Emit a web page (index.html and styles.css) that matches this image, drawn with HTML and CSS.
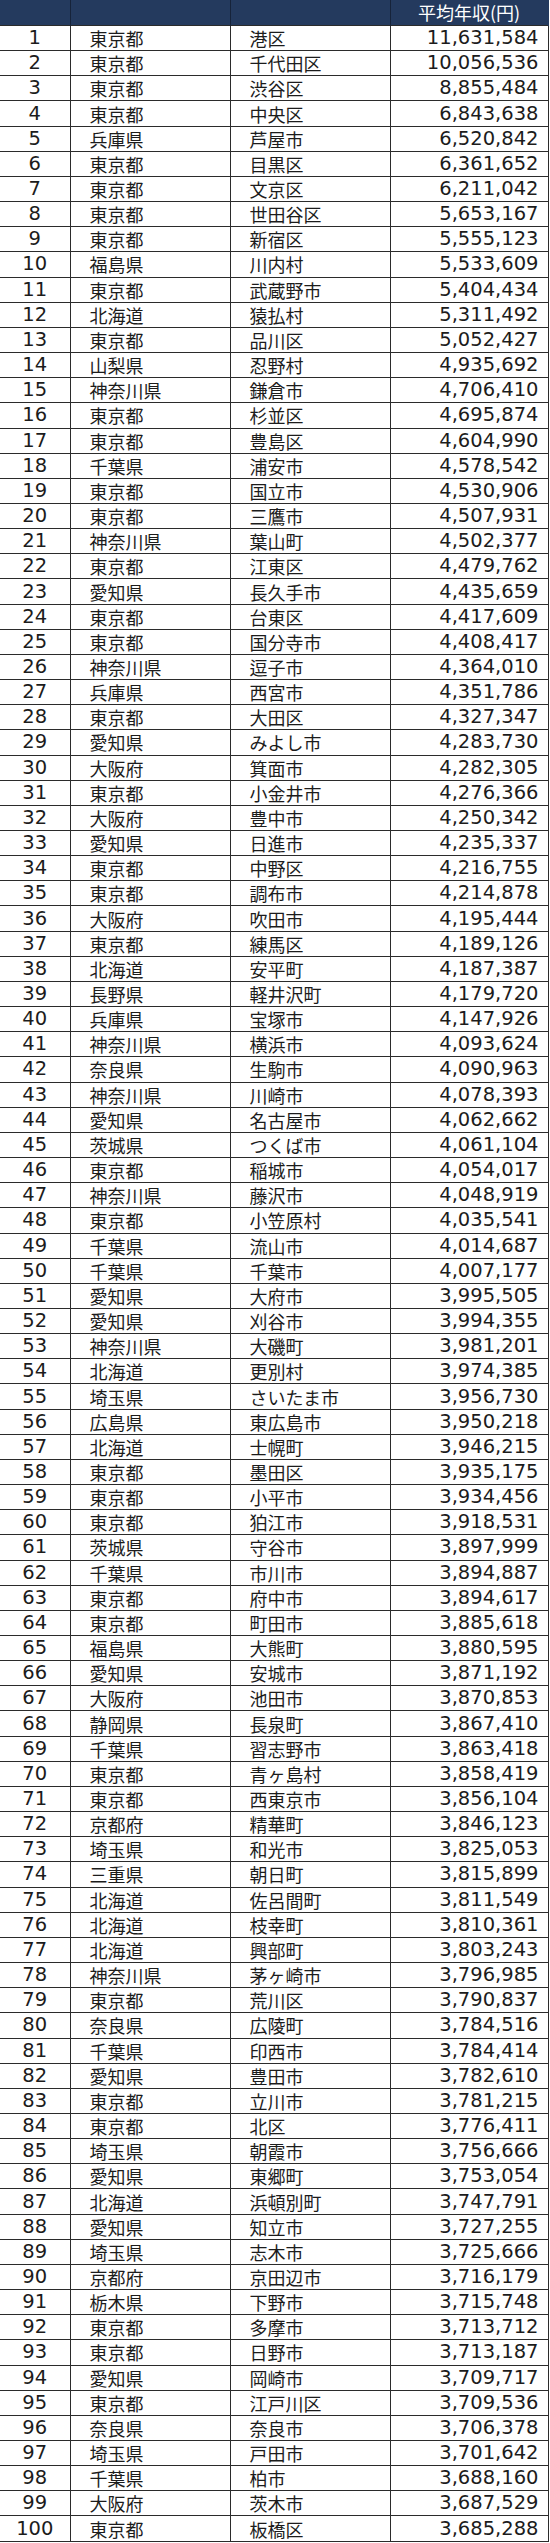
FILE: index.html
```html
<!DOCTYPE html>
<html lang="ja">
<head>
<meta charset="utf-8">
<title>平均年収ランキング</title>
<link rel="stylesheet" href="styles.css">
</head>
<body>
<table class="rank-table">
<colgroup><col class="c-rank"><col class="c-pref"><col class="c-city"><col class="c-num"></colgroup>
<thead>
<tr><th></th><th></th><th></th><th class="h-num">平均年収(円)</th></tr>
</thead>
<tbody>
<tr><td class="rank">1</td><td class="jp">東京都</td><td class="jp">港区</td><td class="num">11,631,584</td></tr>
<tr><td class="rank">2</td><td class="jp">東京都</td><td class="jp">千代田区</td><td class="num">10,056,536</td></tr>
<tr><td class="rank">3</td><td class="jp">東京都</td><td class="jp">渋谷区</td><td class="num">8,855,484</td></tr>
<tr><td class="rank">4</td><td class="jp">東京都</td><td class="jp">中央区</td><td class="num">6,843,638</td></tr>
<tr><td class="rank">5</td><td class="jp">兵庫県</td><td class="jp">芦屋市</td><td class="num">6,520,842</td></tr>
<tr><td class="rank">6</td><td class="jp">東京都</td><td class="jp">目黒区</td><td class="num">6,361,652</td></tr>
<tr><td class="rank">7</td><td class="jp">東京都</td><td class="jp">文京区</td><td class="num">6,211,042</td></tr>
<tr><td class="rank">8</td><td class="jp">東京都</td><td class="jp">世田谷区</td><td class="num">5,653,167</td></tr>
<tr><td class="rank">9</td><td class="jp">東京都</td><td class="jp">新宿区</td><td class="num">5,555,123</td></tr>
<tr><td class="rank">10</td><td class="jp">福島県</td><td class="jp">川内村</td><td class="num">5,533,609</td></tr>
<tr><td class="rank">11</td><td class="jp">東京都</td><td class="jp">武蔵野市</td><td class="num">5,404,434</td></tr>
<tr><td class="rank">12</td><td class="jp">北海道</td><td class="jp">猿払村</td><td class="num">5,311,492</td></tr>
<tr><td class="rank">13</td><td class="jp">東京都</td><td class="jp">品川区</td><td class="num">5,052,427</td></tr>
<tr><td class="rank">14</td><td class="jp">山梨県</td><td class="jp">忍野村</td><td class="num">4,935,692</td></tr>
<tr><td class="rank">15</td><td class="jp">神奈川県</td><td class="jp">鎌倉市</td><td class="num">4,706,410</td></tr>
<tr><td class="rank">16</td><td class="jp">東京都</td><td class="jp">杉並区</td><td class="num">4,695,874</td></tr>
<tr><td class="rank">17</td><td class="jp">東京都</td><td class="jp">豊島区</td><td class="num">4,604,990</td></tr>
<tr><td class="rank">18</td><td class="jp">千葉県</td><td class="jp">浦安市</td><td class="num">4,578,542</td></tr>
<tr><td class="rank">19</td><td class="jp">東京都</td><td class="jp">国立市</td><td class="num">4,530,906</td></tr>
<tr><td class="rank">20</td><td class="jp">東京都</td><td class="jp">三鷹市</td><td class="num">4,507,931</td></tr>
<tr><td class="rank">21</td><td class="jp">神奈川県</td><td class="jp">葉山町</td><td class="num">4,502,377</td></tr>
<tr><td class="rank">22</td><td class="jp">東京都</td><td class="jp">江東区</td><td class="num">4,479,762</td></tr>
<tr><td class="rank">23</td><td class="jp">愛知県</td><td class="jp">長久手市</td><td class="num">4,435,659</td></tr>
<tr><td class="rank">24</td><td class="jp">東京都</td><td class="jp">台東区</td><td class="num">4,417,609</td></tr>
<tr><td class="rank">25</td><td class="jp">東京都</td><td class="jp">国分寺市</td><td class="num">4,408,417</td></tr>
<tr><td class="rank">26</td><td class="jp">神奈川県</td><td class="jp">逗子市</td><td class="num">4,364,010</td></tr>
<tr><td class="rank">27</td><td class="jp">兵庫県</td><td class="jp">西宮市</td><td class="num">4,351,786</td></tr>
<tr><td class="rank">28</td><td class="jp">東京都</td><td class="jp">大田区</td><td class="num">4,327,347</td></tr>
<tr><td class="rank">29</td><td class="jp">愛知県</td><td class="jp">みよし市</td><td class="num">4,283,730</td></tr>
<tr><td class="rank">30</td><td class="jp">大阪府</td><td class="jp">箕面市</td><td class="num">4,282,305</td></tr>
<tr><td class="rank">31</td><td class="jp">東京都</td><td class="jp">小金井市</td><td class="num">4,276,366</td></tr>
<tr><td class="rank">32</td><td class="jp">大阪府</td><td class="jp">豊中市</td><td class="num">4,250,342</td></tr>
<tr><td class="rank">33</td><td class="jp">愛知県</td><td class="jp">日進市</td><td class="num">4,235,337</td></tr>
<tr><td class="rank">34</td><td class="jp">東京都</td><td class="jp">中野区</td><td class="num">4,216,755</td></tr>
<tr><td class="rank">35</td><td class="jp">東京都</td><td class="jp">調布市</td><td class="num">4,214,878</td></tr>
<tr><td class="rank">36</td><td class="jp">大阪府</td><td class="jp">吹田市</td><td class="num">4,195,444</td></tr>
<tr><td class="rank">37</td><td class="jp">東京都</td><td class="jp">練馬区</td><td class="num">4,189,126</td></tr>
<tr><td class="rank">38</td><td class="jp">北海道</td><td class="jp">安平町</td><td class="num">4,187,387</td></tr>
<tr><td class="rank">39</td><td class="jp">長野県</td><td class="jp">軽井沢町</td><td class="num">4,179,720</td></tr>
<tr><td class="rank">40</td><td class="jp">兵庫県</td><td class="jp">宝塚市</td><td class="num">4,147,926</td></tr>
<tr><td class="rank">41</td><td class="jp">神奈川県</td><td class="jp">横浜市</td><td class="num">4,093,624</td></tr>
<tr><td class="rank">42</td><td class="jp">奈良県</td><td class="jp">生駒市</td><td class="num">4,090,963</td></tr>
<tr><td class="rank">43</td><td class="jp">神奈川県</td><td class="jp">川崎市</td><td class="num">4,078,393</td></tr>
<tr><td class="rank">44</td><td class="jp">愛知県</td><td class="jp">名古屋市</td><td class="num">4,062,662</td></tr>
<tr><td class="rank">45</td><td class="jp">茨城県</td><td class="jp">つくば市</td><td class="num">4,061,104</td></tr>
<tr><td class="rank">46</td><td class="jp">東京都</td><td class="jp">稲城市</td><td class="num">4,054,017</td></tr>
<tr><td class="rank">47</td><td class="jp">神奈川県</td><td class="jp">藤沢市</td><td class="num">4,048,919</td></tr>
<tr><td class="rank">48</td><td class="jp">東京都</td><td class="jp">小笠原村</td><td class="num">4,035,541</td></tr>
<tr><td class="rank">49</td><td class="jp">千葉県</td><td class="jp">流山市</td><td class="num">4,014,687</td></tr>
<tr><td class="rank">50</td><td class="jp">千葉県</td><td class="jp">千葉市</td><td class="num">4,007,177</td></tr>
<tr><td class="rank">51</td><td class="jp">愛知県</td><td class="jp">大府市</td><td class="num">3,995,505</td></tr>
<tr><td class="rank">52</td><td class="jp">愛知県</td><td class="jp">刈谷市</td><td class="num">3,994,355</td></tr>
<tr><td class="rank">53</td><td class="jp">神奈川県</td><td class="jp">大磯町</td><td class="num">3,981,201</td></tr>
<tr><td class="rank">54</td><td class="jp">北海道</td><td class="jp">更別村</td><td class="num">3,974,385</td></tr>
<tr><td class="rank">55</td><td class="jp">埼玉県</td><td class="jp">さいたま市</td><td class="num">3,956,730</td></tr>
<tr><td class="rank">56</td><td class="jp">広島県</td><td class="jp">東広島市</td><td class="num">3,950,218</td></tr>
<tr><td class="rank">57</td><td class="jp">北海道</td><td class="jp">士幌町</td><td class="num">3,946,215</td></tr>
<tr><td class="rank">58</td><td class="jp">東京都</td><td class="jp">墨田区</td><td class="num">3,935,175</td></tr>
<tr><td class="rank">59</td><td class="jp">東京都</td><td class="jp">小平市</td><td class="num">3,934,456</td></tr>
<tr><td class="rank">60</td><td class="jp">東京都</td><td class="jp">狛江市</td><td class="num">3,918,531</td></tr>
<tr><td class="rank">61</td><td class="jp">茨城県</td><td class="jp">守谷市</td><td class="num">3,897,999</td></tr>
<tr><td class="rank">62</td><td class="jp">千葉県</td><td class="jp">市川市</td><td class="num">3,894,887</td></tr>
<tr><td class="rank">63</td><td class="jp">東京都</td><td class="jp">府中市</td><td class="num">3,894,617</td></tr>
<tr><td class="rank">64</td><td class="jp">東京都</td><td class="jp">町田市</td><td class="num">3,885,618</td></tr>
<tr><td class="rank">65</td><td class="jp">福島県</td><td class="jp">大熊町</td><td class="num">3,880,595</td></tr>
<tr><td class="rank">66</td><td class="jp">愛知県</td><td class="jp">安城市</td><td class="num">3,871,192</td></tr>
<tr><td class="rank">67</td><td class="jp">大阪府</td><td class="jp">池田市</td><td class="num">3,870,853</td></tr>
<tr><td class="rank">68</td><td class="jp">静岡県</td><td class="jp">長泉町</td><td class="num">3,867,410</td></tr>
<tr><td class="rank">69</td><td class="jp">千葉県</td><td class="jp">習志野市</td><td class="num">3,863,418</td></tr>
<tr><td class="rank">70</td><td class="jp">東京都</td><td class="jp">青ヶ島村</td><td class="num">3,858,419</td></tr>
<tr><td class="rank">71</td><td class="jp">東京都</td><td class="jp">西東京市</td><td class="num">3,856,104</td></tr>
<tr><td class="rank">72</td><td class="jp">京都府</td><td class="jp">精華町</td><td class="num">3,846,123</td></tr>
<tr><td class="rank">73</td><td class="jp">埼玉県</td><td class="jp">和光市</td><td class="num">3,825,053</td></tr>
<tr><td class="rank">74</td><td class="jp">三重県</td><td class="jp">朝日町</td><td class="num">3,815,899</td></tr>
<tr><td class="rank">75</td><td class="jp">北海道</td><td class="jp">佐呂間町</td><td class="num">3,811,549</td></tr>
<tr><td class="rank">76</td><td class="jp">北海道</td><td class="jp">枝幸町</td><td class="num">3,810,361</td></tr>
<tr><td class="rank">77</td><td class="jp">北海道</td><td class="jp">興部町</td><td class="num">3,803,243</td></tr>
<tr><td class="rank">78</td><td class="jp">神奈川県</td><td class="jp">茅ヶ崎市</td><td class="num">3,796,985</td></tr>
<tr><td class="rank">79</td><td class="jp">東京都</td><td class="jp">荒川区</td><td class="num">3,790,837</td></tr>
<tr><td class="rank">80</td><td class="jp">奈良県</td><td class="jp">広陵町</td><td class="num">3,784,516</td></tr>
<tr><td class="rank">81</td><td class="jp">千葉県</td><td class="jp">印西市</td><td class="num">3,784,414</td></tr>
<tr><td class="rank">82</td><td class="jp">愛知県</td><td class="jp">豊田市</td><td class="num">3,782,610</td></tr>
<tr><td class="rank">83</td><td class="jp">東京都</td><td class="jp">立川市</td><td class="num">3,781,215</td></tr>
<tr><td class="rank">84</td><td class="jp">東京都</td><td class="jp">北区</td><td class="num">3,776,411</td></tr>
<tr><td class="rank">85</td><td class="jp">埼玉県</td><td class="jp">朝霞市</td><td class="num">3,756,666</td></tr>
<tr><td class="rank">86</td><td class="jp">愛知県</td><td class="jp">東郷町</td><td class="num">3,753,054</td></tr>
<tr><td class="rank">87</td><td class="jp">北海道</td><td class="jp">浜頓別町</td><td class="num">3,747,791</td></tr>
<tr><td class="rank">88</td><td class="jp">愛知県</td><td class="jp">知立市</td><td class="num">3,727,255</td></tr>
<tr><td class="rank">89</td><td class="jp">埼玉県</td><td class="jp">志木市</td><td class="num">3,725,666</td></tr>
<tr><td class="rank">90</td><td class="jp">京都府</td><td class="jp">京田辺市</td><td class="num">3,716,179</td></tr>
<tr><td class="rank">91</td><td class="jp">栃木県</td><td class="jp">下野市</td><td class="num">3,715,748</td></tr>
<tr><td class="rank">92</td><td class="jp">東京都</td><td class="jp">多摩市</td><td class="num">3,713,712</td></tr>
<tr><td class="rank">93</td><td class="jp">東京都</td><td class="jp">日野市</td><td class="num">3,713,187</td></tr>
<tr><td class="rank">94</td><td class="jp">愛知県</td><td class="jp">岡崎市</td><td class="num">3,709,717</td></tr>
<tr><td class="rank">95</td><td class="jp">東京都</td><td class="jp">江戸川区</td><td class="num">3,709,536</td></tr>
<tr><td class="rank">96</td><td class="jp">奈良県</td><td class="jp">奈良市</td><td class="num">3,706,378</td></tr>
<tr><td class="rank">97</td><td class="jp">埼玉県</td><td class="jp">戸田市</td><td class="num">3,701,642</td></tr>
<tr><td class="rank">98</td><td class="jp">千葉県</td><td class="jp">柏市</td><td class="num">3,688,160</td></tr>
<tr><td class="rank">99</td><td class="jp">大阪府</td><td class="jp">茨木市</td><td class="num">3,687,529</td></tr>
<tr><td class="rank">100</td><td class="jp">東京都</td><td class="jp">板橋区</td><td class="num">3,685,288</td></tr>
</tbody>
</table>
</body>
</html>
```

FILE: styles.css
```css
html, body {
  margin: 0;
  padding: 0;
  background: #ffffff;
}

.rank-table {
  border-collapse: collapse;
  table-layout: fixed;
  width: 548px;
  color: #1c1c1c;
}

.c-rank { width: 70px; }
.c-pref { width: 160px; }
.c-city { width: 160px; }
.c-num { width: 158px; }

.rank-table th {
  height: 25px;
  padding: 0;
  background: #243a5e;
  border-left: 1px solid #16233a;
  color: #ffffff;
  font-family: "Noto Sans CJK JP", sans-serif;
  font-size: 18px;
  font-weight: 400;
  line-height: 25px;
  box-sizing: border-box;
}

.rank-table th:first-child {
  border-left: none;
}

.rank-table th:last-child {
  border-right: 1px solid #243a5e;
}

.rank-table td {
  height: 25.16px;
  padding: 0;
  border: 1px solid #2b2b2b;
  line-height: 22px;
  white-space: nowrap;
  box-sizing: border-box;
}

.rank-table td:first-child {
  border-left: none;
}

.rank {
  text-align: center;
  font-family: "DejaVu Sans", sans-serif;
  font-size: 19.5px;
}

.jp {
  padding-left: 19px !important;
  font-family: "Noto Sans CJK JP", sans-serif;
  font-size: 18px;
}

.num {
  text-align: right;
  padding-right: 9px !important;
  font-family: "DejaVu Sans", sans-serif;
  font-size: 19.5px;
}
```
